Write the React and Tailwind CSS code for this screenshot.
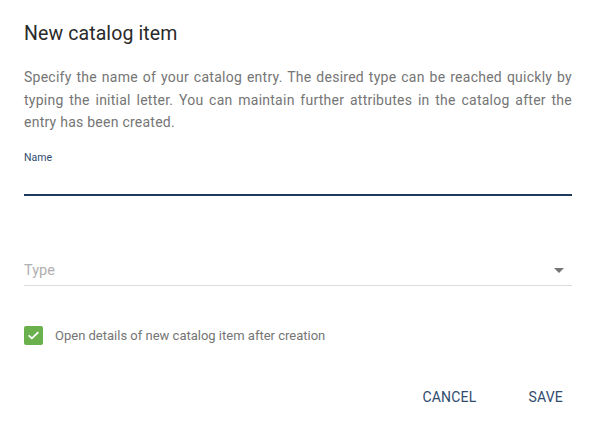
import React from 'react'

const App = () => {
  return (
    <div className="w-[596px] h-[421px] bg-white px-6 pt-[18px] font-['Roboto',sans-serif]">
      <h2 className="text-[19.5px] leading-8 text-[#2a2a2a] font-normal tracking-[0.1px]">New catalog item</h2>

      <p className="mt-[16px] text-[14px] leading-[22.5px] text-[#757575] text-justify tracking-[0.25px]">
        Specify the name of your catalog entry. The desired type can be reached quickly by typing the initial letter. You can maintain further attributes in the catalog after the entry has been created.
      </p>

      {/* Name field */}
      <div className="mt-[16px]">
        <label className="block text-[10.5px] leading-4 text-[#2f4b6e]">Name</label>
        <div className="h-[28px]" />
        <div className="h-[2px] bg-[#1e3a5f]" />
      </div>

      {/* Type select */}
      <div className="mt-[65px] flex items-center justify-between pb-[4px] border-b border-[#dcdcdc]">
        <span className="text-[14.5px] leading-5 text-[#b0b0b0]">Type</span>
        <span className="mr-[8px] w-0 h-0 border-l-[5px] border-r-[5px] border-t-[5px] border-l-transparent border-r-transparent border-t-[#757575]" />
      </div>

      {/* Checkbox */}
      <div className="mt-[40px] flex items-center gap-[12px]">
        <div className="w-[19px] h-[19px] rounded-[2px] bg-[#6ab04c] flex items-center justify-center">
          <svg width="13" height="13" viewBox="0 0 24 24" fill="none" stroke="white" strokeWidth="3.2" strokeLinecap="round" strokeLinejoin="round">
            <path d="M4 12.5l5 5L20 6.5" />
          </svg>
        </div>
        <span className="text-[13px] text-[#757575]">Open details of new catalog item after creation</span>
      </div>

      {/* Actions */}
      <div className="mt-[34px] flex justify-end gap-[20px] -mr-[7px]">
        <button className="px-[16px] h-9 text-[14px] uppercase text-[#2f4b6e] tracking-[0.2px]">Cancel</button>
        <button className="px-[16px] h-9 text-[14px] uppercase text-[#2f4b6e] tracking-[0.2px]">Save</button>
      </div>
    </div>
  )
}

export default App
